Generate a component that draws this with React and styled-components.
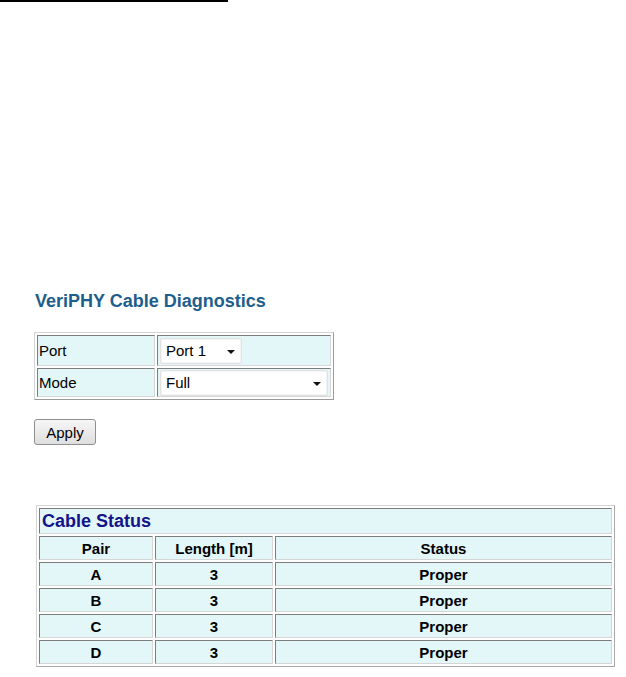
import styled, { createGlobalStyle } from "styled-components";

const GlobalStyle = createGlobalStyle`
  * { box-sizing: border-box; }
  body {
    margin: 0;
    background: #fff;
    font-family: "Liberation Sans", Arial, sans-serif;
    color: #000;
  }
`;

const TopRule = styled.div`
  width: 228px;
  height: 2px;
  background: #000;
`;

const Content = styled.div`
  padding: 0 34px;
`;

const Title = styled.h1`
  margin: 288px 0 0 1px;
  font-size: 18px;
  line-height: 22px;
  font-weight: bold;
  color: #1d5e8c;
`;

const ConfigTable = styled.table`
  margin-top: 20px;
  width: 300px;
  border: 1px solid;
  border-color: #d4d4d4 #9a9a9a #9a9a9a #d4d4d4;
  border-spacing: 2px;
`;

const Cell = styled.td`
  height: ${(p) => p.$h || 24}px;
  width: ${(p) => (p.$w ? `${p.$w}px` : "auto")};
  padding: 0 ${(p) => p.$pad ?? 1}px;
  border: 1px solid;
  border-color: #7c7c7c #d6d6d6 #d6d6d6 #7c7c7c;
  background: #e3f7f9;
  font-size: 15px;
  font-weight: ${(p) => (p.$bold ? "bold" : "normal")};
  text-align: ${(p) => (p.$center ? "center" : "left")};
  vertical-align: middle;
`;

const SelectBox = styled.div`
  display: flex;
  align-items: center;
  justify-content: space-between;
  width: ${(p) => p.$w}px;
  height: 26px;
  padding: 0 6px 0 5px;
  background: #fff;
  border: 1px solid #e2e2e2;
  border-radius: 2px;
  box-shadow: inset 0 0 0 1px #f4f4f4;
  font-size: 15px;
`;

const Caret = styled.span`
  width: 0;
  height: 0;
  border-left: 4px solid transparent;
  border-right: 4px solid transparent;
  border-top: 4px solid #111;
  margin-top: 2px;
`;

const Button = styled.button`
  margin-top: 19px;
  width: 62px;
  height: 26px;
  padding: 0;
  font-family: "Liberation Sans", Arial, sans-serif;
  font-size: 15px;
  color: #000;
  border: 1px solid #8f8f8f;
  border-radius: 3px;
  background: linear-gradient(#f6f6f6, #dedede);
  display: block;
`;

const StatusTable = styled.table`
  margin: 60px 0 0 2px;
  width: 579px;
  border: 1px solid;
  border-color: #d4d4d4 #a8a8a8 #a8a8a8 #d4d4d4;
  border-spacing: 2px;
`;

const StatusTitle = styled.td`
  height: 26px;
  padding: 0 2px;
  border: 1px solid;
  border-color: #7c7c7c #d6d6d6 #d6d6d6 #7c7c7c;
  background: #e3f7f9;
  font-size: 18px;
  font-weight: bold;
  color: #13138a;
`;

const rows = ["A", "B", "C", "D"];

export default function App() {
  return (
    <>
      <GlobalStyle />
      <TopRule />
      <Content>
        <Title>VeriPHY Cable Diagnostics</Title>
        <ConfigTable>
          <tbody>
            <tr>
              <Cell $h={31} $w={125}>Port</Cell>
              <Cell $h={31} $pad={2}>
                <SelectBox $w={82}>
                  Port 1 <Caret />
                </SelectBox>
              </Cell>
            </tr>
            <tr>
              <Cell $h={29}>Mode</Cell>
              <Cell $h={29} $pad={2}>
                <SelectBox $w={168}>
                  Full <Caret />
                </SelectBox>
              </Cell>
            </tr>
          </tbody>
        </ConfigTable>
        <Button>Apply</Button>
        <StatusTable>
          <tbody>
            <tr>
              <StatusTitle colSpan={3}>Cable Status</StatusTitle>
            </tr>
            <tr>
              <Cell $bold $center $w={114}>Pair</Cell>
              <Cell $bold $center $w={118}>Length [m]</Cell>
              <Cell $bold $center>Status</Cell>
            </tr>
            {rows.map((r) => (
              <tr key={r}>
                <Cell $bold $center>{r}</Cell>
                <Cell $bold $center>3</Cell>
                <Cell $bold $center>Proper</Cell>
              </tr>
            ))}
          </tbody>
        </StatusTable>
      </Content>
    </>
  );
}
